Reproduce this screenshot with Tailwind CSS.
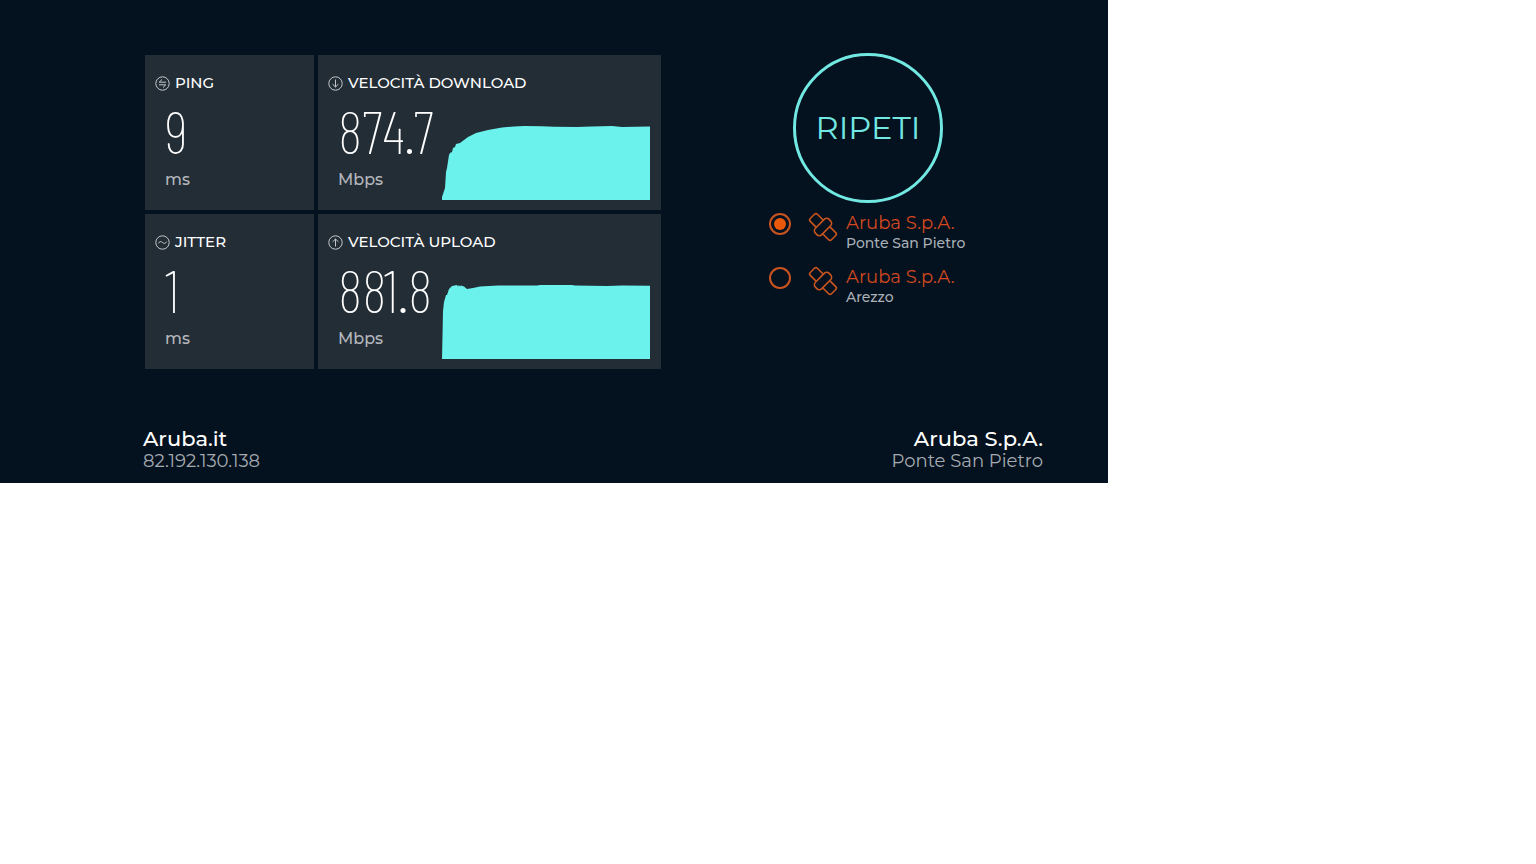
<!DOCTYPE html>
<html lang="it">
<head>
    <meta charset="UTF-8">
    <meta name="viewport" content="width=device-width, initial-scale=1.0">
    <title>Speed test</title>
    <script src="https://cdn.jsdelivr.net/npm/@tailwindcss/browser@4"></script>
</head>
<body class="bg-white font-['Montserrat','Inter',sans-serif]">
<main class="max-w-[1108px] bg-[#04111e] pt-[53px] pr-[65px] pb-3 pl-[143px] text-white">
    <div class="flex gap-8">
        <section class="grid w-[518px] grid-cols-[169fr_343fr] gap-1 pt-[2px] pl-[2px]">
            <div class="bg-[#232d36] pt-[18px] pb-[10px]">
                <h2 class="flex items-center gap-[5px] pl-[10px] text-[15px] leading-5 font-medium">
                    <svg class="size-[15px] text-[#c3c7cb]" viewBox="0 0 15 15" fill="none" stroke="currentColor">
                        <circle cx="7.5" cy="7.5" r="6.7"/>
                        <path d="M11 6.200H4.200L7 3.500M4 8.800h6.800L8 11.500"/>
                    </svg>
                    PING
                </h2>
                <div class="mt-4 pl-5">
                    <p class="font-['Barlow_Condensed','Roboto_Condensed','Liberation_Sans_Narrow',sans-serif] text-[59px] leading-11 font-extralight">9</p>
                    <p class="mt-[15px] text-base leading-6 font-medium text-[#b3b7bc]">ms</p>
                </div>
            </div>

            <div class="bg-[#232d36] pt-[18px] pb-[10px]">
                <h2 class="flex items-center gap-[5px] pl-[10px] text-[15px] leading-5 font-medium">
                    <svg class="size-[15px] text-[#c3c7cb]" viewBox="0 0 15 15" fill="none" stroke="currentColor">
                        <circle cx="7.5" cy="7.5" r="6.7"/>
                        <path d="M7.500 3.500v7.500M4.600 8.200l2.900 2.800 2.900-2.800"/>
                    </svg>
                    VELOCITÀ DOWNLOAD
                </h2>
                <div class="mt-4 flex items-end justify-between pr-[11px] pl-5">
                    <div class="w-[104px] pb-2">
                        <p class="font-['Barlow_Condensed','Roboto_Condensed','Liberation_Sans_Narrow',sans-serif] text-[59px] leading-11 font-extralight">874.7</p>
                        <p class="mt-[15px] text-base leading-6 font-medium text-[#b3b7bc]">Mbps</p>
                    </div>
                    <svg class="h-[75px] flex-1" viewBox="0 0 208 75" preserveAspectRatio="none" fill="#6cf2ec">
                        <path d="M0 75V72L3 63 4 47 5 43 7 30 8 28 10 27 11 23 13 22 14 19 18 18 26 12 34 8 46 5 60 2.500 72 1.500 82 1 100 1.200 112 1.800 135 2 150 1.500 170 1 180 2 208 1.500V75Z"/>
                    </svg>
                </div>
            </div>

            <div class="bg-[#232d36] pt-[18px] pb-[10px]">
                <h2 class="flex items-center gap-[5px] pl-[10px] text-[15px] leading-5 font-medium">
                    <svg class="size-[15px] text-[#c3c7cb]" viewBox="0 0 15 15" fill="none" stroke="currentColor">
                        <circle cx="7.5" cy="7.5" r="6.7"/>
                        <path d="M3.500 8.300c1-2 2.500-2.200 4-.8s3 1.200 4-.8"/>
                    </svg>
                    JITTER
                </h2>
                <div class="mt-4 pl-5">
                    <p class="font-['Barlow_Condensed','Roboto_Condensed','Liberation_Sans_Narrow',sans-serif] text-[59px] leading-11 font-extralight">1</p>
                    <p class="mt-[15px] text-base leading-6 font-medium text-[#b3b7bc]">ms</p>
                </div>
            </div>

            <div class="bg-[#232d36] pt-[18px] pb-[10px]">
                <h2 class="flex items-center gap-[5px] pl-[10px] text-[15px] leading-5 font-medium">
                    <svg class="size-[15px] text-[#c3c7cb]" viewBox="0 0 15 15" fill="none" stroke="currentColor">
                        <circle cx="7.5" cy="7.5" r="6.7"/>
                        <path d="M7.500 11.500V4M4.600 6.800L7.500 4l2.900 2.800"/>
                    </svg>
                    VELOCITÀ UPLOAD
                </h2>
                <div class="mt-4 flex items-end justify-between pr-[11px] pl-5">
                    <div class="w-[104px] pb-2">
                        <p class="font-['Barlow_Condensed','Roboto_Condensed','Liberation_Sans_Narrow',sans-serif] text-[59px] leading-11 font-extralight">881.8</p>
                        <p class="mt-[15px] text-base leading-6 font-medium text-[#b3b7bc]">Mbps</p>
                    </div>
                    <svg class="h-[75px] flex-1" viewBox="0 0 208 75" preserveAspectRatio="none" fill="#6cf2ec">
                        <path d="M0 75L1 27 2 18 4 11 5 11 7 5 10 2 15 1 16 2.500 17 1 18 2.500 19 1.500 22 2.500 25 5 31 4 38 2.500 56 1.500 95 1.500 98 1 130 1 133 1.500 165 2 180 1.500 208 1.800V75Z"/>
                    </svg>
                </div>
            </div>
        </section>

        <section class="flex flex-1 flex-col items-center">
            <button type="button" class="size-[150px] cursor-pointer rounded-full border-3 border-[#72e8e2] text-[32px] text-[#72e8e2]">RIPETI</button>

            <form class="mt-[10px] flex w-[198px] flex-col gap-[14px]">
                <label class="flex items-start">
                    <input type="radio" name="server" checked class="grid size-[22px] shrink-0 appearance-none place-content-center rounded-full border-2 border-[#c9541f] before:size-3 before:rounded-full checked:before:bg-[#ea580c]">
                    <svg class="ml-[18px] size-7 shrink-0 overflow-visible" viewBox="0 0 28 28" fill="none" stroke="#c9551f" stroke-width="1.6">
                        <g transform="rotate(45 14 14)">
                            <path d="M9.500 9H1a2 2 0 0 0-2 2v6a2 2 0 0 0 2 2h8.500M18.500 9H27a2 2 0 0 1 2 2v6a2 2 0 0 1-2 2h-8.500"/>
                            <rect x="9.500" y="4.300" width="9" height="19.400" rx="3.500"/>
                        </g>
                    </svg>
                    <span class="ml-[9px] whitespace-nowrap">
                        <span class="block text-[18px] leading-5 text-[#d3481f]">Aruba S.p.A.</span>
                        <span class="block text-[14px] leading-5 font-medium text-[#a8b0b8]">Ponte San Pietro</span>
                    </span>
                </label>
                <label class="flex items-start">
                    <input type="radio" name="server" class="grid size-[22px] shrink-0 appearance-none place-content-center rounded-full border-2 border-[#c9541f] before:size-3 before:rounded-full checked:before:bg-[#ea580c]">
                    <svg class="ml-[18px] size-7 shrink-0 overflow-visible" viewBox="0 0 28 28" fill="none" stroke="#c9551f" stroke-width="1.6">
                        <g transform="rotate(45 14 14)">
                            <path d="M9.500 9H1a2 2 0 0 0-2 2v6a2 2 0 0 0 2 2h8.500M18.500 9H27a2 2 0 0 1 2 2v6a2 2 0 0 1-2 2h-8.500"/>
                            <rect x="9.500" y="4.300" width="9" height="19.400" rx="3.500"/>
                        </g>
                    </svg>
                    <span class="ml-[9px] whitespace-nowrap">
                        <span class="block text-[18px] leading-5 text-[#d3481f]">Aruba S.p.A.</span>
                        <span class="block text-[14px] leading-5 font-medium text-[#a8b0b8]">Arezzo</span>
                    </span>
                </label>
            </form>
        </section>
    </div>

    <footer class="mt-[58px] flex justify-between">
        <div>
            <p class="text-[21px] leading-6 font-medium">Aruba.it</p>
            <p class="text-[18px] leading-5 text-[#a5abb1]">82.192.130.138</p>
        </div>
        <div class="text-right">
            <p class="text-[21px] leading-6 font-medium">Aruba S.p.A.</p>
            <p class="text-[18px] leading-5 text-[#a5abb1]">Ponte San Pietro</p>
        </div>
    </footer>
</main>
</body>
</html>
